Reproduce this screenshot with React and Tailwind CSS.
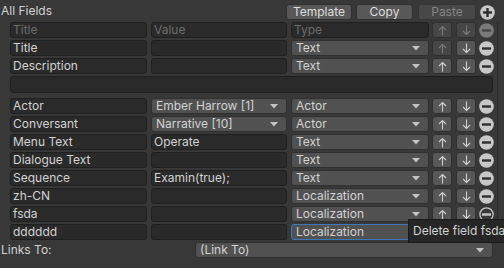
import React from "react";

const font = { fontFamily: "Inter, 'Noto Sans', sans-serif" };

function Arrow({ dir = "up", dim }) {
  const c = dim ? "#7b7b7b" : "#cfcfcf";
  return (
    <svg width="9" height="11" viewBox="0 0 9 11">
      {dir === "up" ? (
        <path d="M4.5 1.5V10.5M1 5L4.5 1.5L8 5" stroke={c} strokeWidth="1.1" fill="none" />
      ) : (
        <path d="M4.5 0.5V9.5M1 6L4.5 9.5L8 6" stroke={c} strokeWidth="1.1" fill="none" />
      )}
    </svg>
  );
}

function Caret() {
  return (
    <svg width="8" height="5" viewBox="0 0 8 5" className="shrink-0">
      <polygon points="0,0 8,0 4,4.5" fill="#c4c4c4" />
    </svg>
  );
}

function Field({ text, dim, className = "" }) {
  return (
    <div
      className={`h-[16px] shrink-0 rounded-[3px] border border-[#1f1f1f] bg-[#2a2a2a] px-[2px] text-[12px] leading-[14px] whitespace-nowrap overflow-hidden ${
        dim ? "text-[#6c6c6c]" : "text-[#d2d2d2]"
      } ${className}`}
    >
      {text}
    </div>
  );
}

function Drop({ text, focus, className = "" }) {
  return (
    <div
      className={`h-[16px] shrink-0 rounded-[3px] border bg-[#515151] pl-[4px] pr-[8px] flex items-center justify-between text-[12px] leading-[14px] text-[#d2d2d2] whitespace-nowrap overflow-hidden ${
        focus ? "border-[#3a79bb]" : "border-[#303030]"
      } ${className}`}
    >
      <span>{text}</span>
      <Caret />
    </div>
  );
}

function SmallBtn({ dir, dim, className = "" }) {
  return (
    <div
      className={`h-[16px] w-[20px] shrink-0 rounded-[3px] border border-[#303030] flex items-center justify-center ${
        dim ? "bg-[#464646]" : "bg-[#575757]"
      } ${className}`}
    >
      <Arrow dir={dir} dim={dim} />
    </div>
  );
}

function Circle({ kind = "minus", variant = "on", className = "" }) {
  const fill = variant === "dim" ? "#7a7a7a" : variant === "outline" ? "none" : "#c8c8c8";
  const bar = variant === "dim" ? "#474747" : variant === "outline" ? "#c8c8c8" : "#2e2e2e";
  return (
    <svg width="15" height="15" viewBox="0 0 15 15" className={`shrink-0 ${className}`}>
      <circle
        cx="7.5"
        cy="7.5"
        r={variant === "outline" ? 6.6 : 7.3}
        fill={fill}
        stroke={variant === "outline" ? "#c8c8c8" : "none"}
        strokeWidth="1.3"
      />
      <rect x="3" y="6.3" width="9" height="2.4" fill={bar} />
      {kind === "plus" && <rect x="6.3" y="3" width="2.4" height="9" fill={bar} />}
    </svg>
  );
}

function Row({ title, value, valueDrop, type, up, down, circle = "on", focus }) {
  return (
    <div className="flex items-center h-[16px]">
      <Field text={title} className="w-[137px]" />
      {valueDrop ? (
        <Drop text={value} className="ml-[4px] w-[136px]" />
      ) : (
        <Field text={value} className="ml-[4px] w-[136px]" />
      )}
      <Drop text={type} focus={focus} className="ml-[4px] w-[138px]" />
      <SmallBtn dir="up" dim={!up} className="ml-[3px]" />
      <SmallBtn dir="down" dim={!down} className="ml-[4px]" />
      <Circle variant={circle} className="ml-[3px]" />
    </div>
  );
}

const fields = [
  { title: "Actor", value: "Ember Harrow [1]", valueDrop: true, type: "Actor" },
  { title: "Conversant", value: "Narrative [10]", valueDrop: true, type: "Actor" },
  { title: "Menu Text", value: "Operate", type: "Text" },
  { title: "Dialogue Text", value: "", type: "Text" },
  { title: "Sequence", value: "Examin(true);", type: "Text" },
  { title: "zh-CN", value: "", type: "Localization" },
  { title: "fsda", value: "", type: "Localization", circle: "outline" },
];

export default function App() {
  return (
    <div className="relative w-[504px] h-[268px] overflow-hidden bg-[#383838] text-[#d2d2d2]" style={font}>
      {/* top bar */}
      <div className="flex items-center pt-[4px] h-[20px]">
        <span className="pl-[1px] text-[12px] leading-[16px] -mt-[3px]">All Fields</span>
        <div className="ml-auto flex items-center pr-[9px]">
          <div className="h-[16px] w-[66px] rounded-[3px] border border-[#303030] bg-[#585858] text-[12px] leading-[14px] text-center text-[#dedede]">
            Template
          </div>
          <div className="ml-[4px] h-[16px] w-[57px] rounded-[3px] border border-[#303030] bg-[#585858] text-[12px] leading-[14px] text-center text-[#dedede]">
            Copy
          </div>
          <div className="ml-[5px] h-[16px] w-[58px] rounded-[3px] border border-[#353535] bg-[#474747] text-[12px] leading-[14px] text-center text-[#858585]">
            Paste
          </div>
          <Circle kind="plus" className="ml-[4px]" />
        </div>
      </div>

      {/* field list */}
      <div className="mt-[2px] ml-[10px] w-[488px] border-r border-[#2a2a2a] flex flex-col">
        <div className="flex items-center h-[16px]">
          <Field text="Title" dim className="w-[137px]" />
          <Field text="Value" dim className="ml-[4px] w-[136px]" />
          <Field text="Type" dim className="ml-[4px] w-[138px]" />
          <SmallBtn dir="up" dim className="ml-[3px]" />
          <SmallBtn dir="down" dim className="ml-[4px]" />
          <Circle variant="dim" className="ml-[3px]" />
        </div>
        <div className="mt-[2px]">
          <Row title="Title" value="" type="Text" down />
        </div>
        <div className="mt-[2px]">
          <Row title="Description" value="" type="Text" up down />
        </div>
        <div className="mt-[2px] h-[17px] w-[483px] rounded-[3px] border border-[#1f1f1f] bg-[#2a2a2a]" />
        <div className="mt-[5px] flex flex-col gap-[2px]">
          {fields.map((f) => (
            <Row key={f.title} {...f} up down circle={f.circle || "on"} />
          ))}
          <Row title="dddddd" value="" type="Localization" focus up down />
        </div>
      </div>

      {/* links to */}
      <div className="flex items-center mt-[2px] h-[16px]">
        <span className="pl-[1px] text-[12px] leading-[16px] w-[195px]">Links To:</span>
        <Drop text="(Link To)" className="w-[298px]" />
      </div>

      {/* tooltip */}
      <div className="absolute left-[408px] top-[219px] h-[24px] w-[110px] border border-[#1a1a1a] bg-[#262626] pl-[4px] text-[12px] leading-[22px] text-[#d2d2d2] whitespace-nowrap">
        Delete field fsda
      </div>
    </div>
  );
}
